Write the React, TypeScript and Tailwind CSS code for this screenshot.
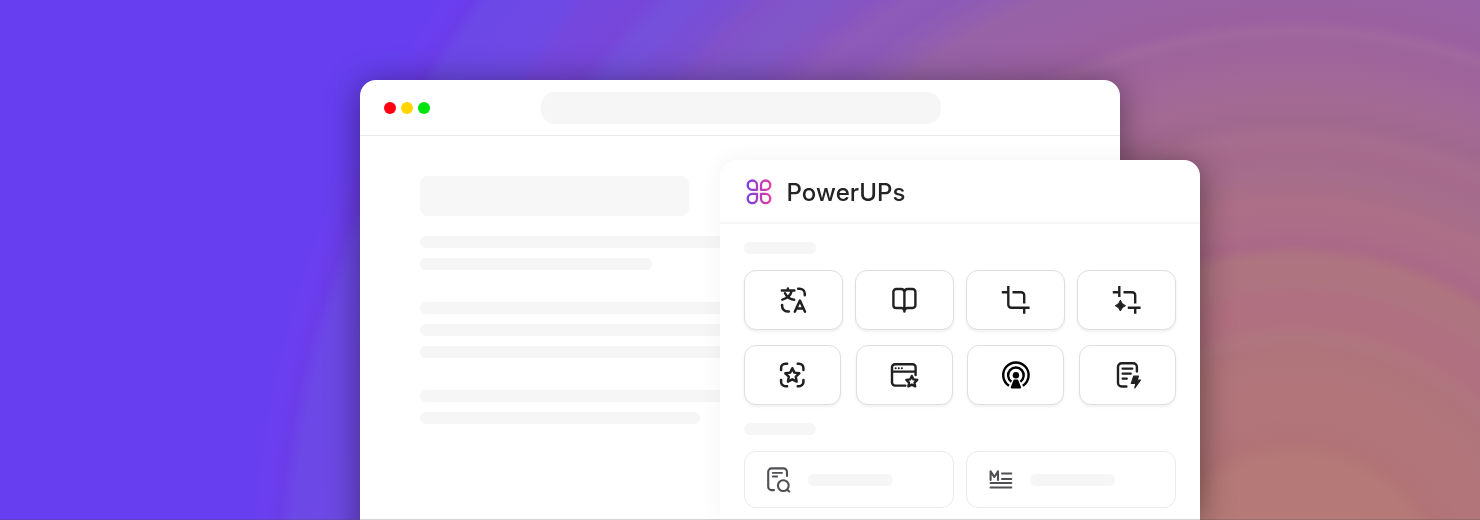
import type { ReactNode } from "react";

const glow: [number, string][] = [
  [0, "#b67b76"], [140, "#b57a77"], [160, "#b17377"], [185, "#b1757a"], [240, "#b0757a"],
  [252, "#af737c"], [262, "#af767e"], [280, "#b17080"], [304, "#b07082"], [318, "#ae7480"],
  [342, "#ae7480"], [356, "#aa6986"], [372, "#ac6d88"], [398, "#ac6f86"], [412, "#a86e88"],
  [425, "#a66d8c"], [448, "#a56a8c"], [464, "#a76d8f"], [480, "#a1688e"], [502, "#a46a95"],
  [530, "#a16799"], [558, "#9d649c"], [569, "#a0689f"], [582, "#9a60a0"], [602, "#9a62a2"],
  [630, "#9862a6"], [648, "#9863a6"], [665, "#925fb0"], [690, "#8c59b8"], [712, "#8e5bb9"],
  [735, "#8755c1"], [755, "#8156c6"], [782, "#8055c8"], [800, "#8251c9"], [815, "#7a50d1"],
  [835, "#784ed6"], [848, "#7551da"], [866, "#7450db"], [884, "#7746d9"], [920, "#7547dc"],
  [938, "#6f49e3"], [1005, "#6c48e7"], [1018, "#6b3de9"], [1034, "#6a3fef"], [1050, "#673ff0"],
];

function Backdrop() {
  return (
    <svg className="absolute inset-0 h-full w-full" viewBox="0 0 1480 520" preserveAspectRatio="none">
      <defs>
        <radialGradient id="glow" gradientUnits="userSpaceOnUse" cx="1295" cy="600" r="1050">
          {glow.map(([r, color]) => (
            <stop key={r} offset={r / 1050} stopColor={color} />
          ))}
        </radialGradient>
      </defs>
      <rect width="1480" height="520" fill="url(#glow)" />
    </svg>
  );
}

function Glyph({ children, width = 2.5, box = "0.6 0 32 32" }: { children: ReactNode; width?: number; box?: string }) {
  return (
    <svg
      className="size-8 shrink-0"
      viewBox={box}
      fill="none"
      stroke="currentColor"
      strokeWidth={width}
      strokeLinecap="round"
      strokeLinejoin="round"
    >
      {children}
    </svg>
  );
}

const STAR = "M0 -1 L.29 -.4 L.95 -.31 L.47 .15 L.59 .81 L0 .5 L-.59 .81 L-.47 .15 L-.95 -.31 L-.29 -.4Z";

const Translate = () => (
  <Glyph width={2.5}>
    <path d="M4.5 6.4H17M10.5 4.4V6.4M14.4 6.8C13.2 11.5 9.8 14.6 4.9 15.6M7.6 9.2C9.3 12.7 12.6 15.2 16.8 15.8" />
    <path d="M20.8 4.7H22.2A5.2 5.2 0 0 1 27.4 9.9V11.2M4.7 20.9V22A5.4 5.4 0 0 0 10.1 27.4H11.4" />
    <path d="M17.4 27.7L22.5 16.6L27.6 27.7M19.2 24.4H25.8" />
  </Glyph>
);
const Book = () => (
  <Glyph width={2.4}>
    <path d="M16 8.3C16 6.3 14.6 5 12.6 5H8A3 3 0 0 0 5 8V21.3A2.7 2.7 0 0 0 7.7 24H13C14.8 24 16 25.3 16 27.5C16 25.3 17.2 24 19 24H24.3A2.7 2.7 0 0 0 27 21.3V8A3 3 0 0 0 24 5H19.4C17.4 5 16 6.3 16 8.3ZM16 8.3V27.5" />
  </Glyph>
);
const Crop = () => (
  <Glyph width={2.4} box="0 0 32 32">
    <g strokeLinecap="butt">
      <path d="M1.8 8.3H8.3M8.3 2V20.7A3 3 0 0 0 11.3 23.7H29.6M12.5 8.3H21.2A3 3 0 0 1 24.2 11.3V19.6M24.2 23.7V29.8" />
    </g>
  </Glyph>
);
const CropSparkle = () => (
  <Glyph width={2.4} box="0 0 32 32">
    <g strokeLinecap="butt">
      <path d="M1.8 8.3H8.3M8.3 2V13M12.5 8.3H21.2A3 3 0 0 1 24.2 11.3V19.6M16.8 23.7H29.6M24.2 23.7V29.8" />
    </g>
    <path d="M9.4 16.4Q10.7 20.4 14.6 21.7Q10.7 23 9.4 27Q8.1 23 4.2 21.7Q8.1 20.4 9.4 16.4Z" fill="currentColor" strokeWidth="1" />
  </Glyph>
);
const ScanStar = () => (
  <Glyph width={2.5}>
    <path d="M4.7 11V9A4.3 4.3 0 0 1 9 4.7H10.7M21.3 4.7H22.7A4.3 4.3 0 0 1 27 9V11M27 21V22.9A4.3 4.3 0 0 1 22.7 27.2H21.3M10.7 27.2H9A4.3 4.3 0 0 1 4.7 22.9V21" />
    <path d={STAR} transform="translate(15.9 16.6) scale(7.4)" strokeWidth=".33" />
  </Glyph>
);
const WindowStar = () => (
  <Glyph width={2.4} box="0 0 32 32">
    <path d="M17.4 26.6H7A3 3 0 0 1 4 23.6V8.3A3 3 0 0 1 7 5.3H24.6A3 3 0 0 1 27.6 8.3V16M4 12.6H27.6" />
    <path d="M7.6 9.2H7.7M10.7 9.2H10.8M13.8 9.2H13.9" strokeWidth="2" />
    <path d={STAR} transform="translate(23.8 22.7) scale(5.8)" strokeWidth=".4" />
  </Glyph>
);
const Podcast = () => (
  <Glyph width={2.4}>
    <g strokeLinecap="butt">
      <path d="M9.6 26.8A12.7 12.7 0 1 1 23.4 26.8" />
      <path d="M12 22.7A7.8 7.8 0 1 1 21 22.7" />
    </g>
    <circle cx="16.5" cy="16.2" r="3.2" fill="currentColor" stroke="none" />
    <path d="M14.9 21.3H18.1L20.9 28.6H12.1Z" fill="currentColor" strokeWidth="1.6" />
  </Glyph>
);
const NoteBolt = () => (
  <Glyph width={2.4} box="0 0 32 32">
    <path d="M15.4 27.5H10.7A3.7 3.7 0 0 1 7 23.8V7.9A3.7 3.7 0 0 1 10.7 4.2H22.2A3.7 3.7 0 0 1 25.9 7.9V12.4" />
    <path d="M11.6 9.7H21.3M11.6 14.7H19.8M11.6 19.7H15.8" strokeWidth="2.2" />
    <path d="M22.7 17.2H27.4L26 21.2H29.4L23.8 29L24.9 24.5H20.3Z" fill="currentColor" strokeWidth="1.2" />
  </Glyph>
);
const NoteSearch = () => (
  <Glyph width={2.1} box="0 0 32 32">
    <path d="M11 26.1H8.6A3.4 3.4 0 0 1 5.2 22.7V7.8A3.4 3.4 0 0 1 8.6 4.4H20.6A3.4 3.4 0 0 1 24 7.8V12" />
    <path d="M9.8 8.9H19M9.8 12.5H14.2" strokeWidth="1.9" />
    <circle cx="20.3" cy="21.6" r="5.4" />
    <path d="M24.3 25.7L26.3 27.5" />
  </Glyph>
);
const Markdown = () => (
  <Glyph width={2.1} box="0 0 32 32">
    <path d="M5.6 16V7.4L9.3 13L13 7.4V16" />
    <path d="M17 9.4H26.3M17 14.9H26.3M5.5 19H26.3M5.5 23.6H26.3" strokeWidth="2" />
  </Glyph>
);

function Logo() {
  return (
    <svg className="size-7" viewBox="0.2 -1.1 28 28" fill="none" stroke="url(#brand)" strokeWidth="2.3" strokeLinejoin="round">
      <defs>
        <linearGradient id="brand" gradientUnits="userSpaceOnUse" x1="2" y1="0" x2="26" y2="0">
          <stop offset="0" stopColor="#7a3ce0" />
          <stop offset="1" stopColor="#e63da0" />
        </linearGradient>
      </defs>
      <path d="M12.2 11.7V7A4.65 4.65 0 1 0 7.5 11.7Z" />
      <path d="M16.2 11.7V7A4.65 4.65 0 1 1 20.9 11.7Z" />
      <path d="M12.2 15.8V20.5A4.65 4.65 0 1 1 7.5 15.8Z" />
      <path d="M16.2 15.8V20.5A4.65 4.65 0 1 0 20.9 15.8Z" />
    </svg>
  );
}

function Tile({ wide, children }: { wide?: boolean; children: ReactNode }) {
  return (
    <div
      className={`flex h-[60px] items-center justify-center rounded-xl border border-[#dedede] bg-white shadow-[0_2px_3px_rgba(0,0,0,0.06)] ${
        wide ? "w-[99px]" : "w-[97px]"
      }`}
    >
      {children}
    </div>
  );
}

function Card({ children }: { children: ReactNode }) {
  return (
    <div className="flex h-[57px] w-[210px] items-center rounded-xl border border-[#ebebeb] bg-white pt-px pl-[18px] text-[#505054]">
      {children}
      <div className="ml-[13px] h-3 w-[85px] rounded-md bg-[#f6f6f6]" />
    </div>
  );
}

function PowerPanel() {
  return (
    <section className="absolute left-[360px] top-20 h-[360px] w-[480px] rounded-t-2xl bg-white shadow-[0_0_24px_rgba(0,0,0,0.05)]">
      <header className="flex h-16 items-center gap-[13.5px] border-b-2 border-[#f4f4f4] pl-[25px]">
        <Logo />
        <h1 className="pt-[3px] text-2xl font-medium leading-8 tracking-[0.1px] text-[#242426]">PowerUPs</h1>
      </header>
      <div className="px-6 pt-[18px]">
        <div className="h-3 w-[72px] rounded-md bg-[#f6f6f6]" />
        <div className="mt-4 flex justify-between text-[#202022]">
          <Tile wide><Translate /></Tile>
          <Tile wide><Book /></Tile>
          <Tile wide><Crop /></Tile>
          <Tile wide><CropSparkle /></Tile>
        </div>
        <div className="mt-[15px] flex justify-between text-[#202022]">
          <Tile><ScanStar /></Tile>
          <Tile><WindowStar /></Tile>
          <Tile><div className="text-black"><Podcast /></div></Tile>
          <Tile><NoteBolt /></Tile>
        </div>
        <div className="mt-[17.5px] h-3 w-[72px] rounded-md bg-[#f6f6f6]" />
        <div className="mt-[16.5px] flex justify-between">
          <Card><NoteSearch /></Card>
          <Card><Markdown /></Card>
        </div>
      </div>
    </section>
  );
}

const Line = ({ width }: { width: string }) => <div className={`h-3 rounded-md bg-[#f6f6f6] ${width}`} />;

export default function App() {
  return (
    <main className="relative h-[520px] w-[1480px] overflow-hidden bg-[#673ff0] font-['Inter',sans-serif]">
      <Backdrop />
      <div className="relative ml-[360px] pt-20">
        <div className="relative h-[440px] w-[760px] drop-shadow-[0_4px_17px_rgba(0,0,0,0.42)]">
          <div className="h-[480px] rounded-t-2xl bg-white">
            <div className="flex h-14 items-center border-b border-[#e9e9eb] pl-6">
              <div className="flex gap-[5px]">
                <span className="size-3 rounded-full bg-[#ff0010]" />
                <span className="size-3 rounded-full bg-[#ffd600]" />
                <span className="size-3 rounded-full bg-[#00e60c]" />
              </div>
              <div className="ml-[110.5px] h-8 w-[400px] rounded-[14px] bg-[#f6f6f6]" />
            </div>
            <div className="flex flex-col px-[60px] pt-10">
              <div className="h-10 w-[269px] rounded-lg bg-[#f7f7f7]" />
              <div className="mt-5 flex flex-col gap-2.5">
                <Line width="w-[480px]" />
                <Line width="w-[232px]" />
              </div>
              <div className="mt-8 flex flex-col gap-2.5">
                <Line width="w-[480px]" />
                <Line width="w-[480px]" />
                <Line width="w-[480px]" />
              </div>
              <div className="mt-8 flex flex-col gap-2.5">
                <Line width="w-[480px]" />
                <Line width="w-[280px]" />
              </div>
            </div>
          </div>
          <PowerPanel />
        </div>
      </div>
      <div className="absolute inset-x-0 bottom-0 h-px bg-[#505050]/25" />
    </main>
  );
}
